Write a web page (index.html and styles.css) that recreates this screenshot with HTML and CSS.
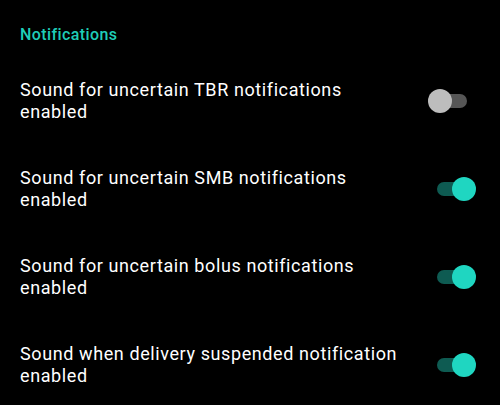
FILE: index.html
```html
<!DOCTYPE html>
<html>
<head>
<meta charset="utf-8">
<link rel="stylesheet" href="styles.css">
</head>
<body>
<div class="screen">
  <div class="category">Notifications</div>
  <div class="pref">
    <div class="pref-title">Sound for uncertain TBR notifications enabled</div>
    <div class="switch"><span class="track"></span><span class="thumb"></span></div>
  </div>
  <div class="pref">
    <div class="pref-title">Sound for uncertain SMB notifications enabled</div>
    <div class="switch on"><span class="track"></span><span class="thumb"></span></div>
  </div>
  <div class="pref">
    <div class="pref-title">Sound for uncertain bolus notifications enabled</div>
    <div class="switch on"><span class="track"></span><span class="thumb"></span></div>
  </div>
  <div class="pref">
    <div class="pref-title">Sound when delivery suspended notification enabled</div>
    <div class="switch on"><span class="track"></span><span class="thumb"></span></div>
  </div>
</div>
</body>
</html>
```
FILE: styles.css
```css
html, body {
  margin: 0;
  padding: 0;
  background: #000;
}
.screen {
  width: 500px;
  height: 405px;
  overflow: hidden;
  font-family: Roboto, "Noto Sans", sans-serif;
  background: #000;
}
.category {
  padding: 25px 20px 0 20px;
  font-size: 16px;
  line-height: 20px;
  font-weight: 500;
  letter-spacing: 0.4px;
  color: #1fcdb8;
  height: 32px;
}
.pref {
  display: flex;
  align-items: center;
  justify-content: space-between;
  padding: 22px 24px 22px 20px;
}
.pref-title {
  width: 385px;
  font-size: 18px;
  line-height: 22px;
  letter-spacing: 0.6px;
  color: #fff;
}
.switch {
  position: relative;
  width: 48px;
  height: 24px;
  flex: none;
}
.track {
  position: absolute;
  left: 9px;
  top: 5px;
  width: 30px;
  height: 14px;
  border-radius: 7px;
  background: #565656;
}
.thumb {
  position: absolute;
  left: 0;
  top: 0;
  width: 24px;
  height: 24px;
  border-radius: 50%;
  background: #bdbdbd;
}
.switch.on .track {
  background: #0e5b52;
}
.switch.on .thumb {
  left: 24px;
  background: #1fd6c1;
}
```
